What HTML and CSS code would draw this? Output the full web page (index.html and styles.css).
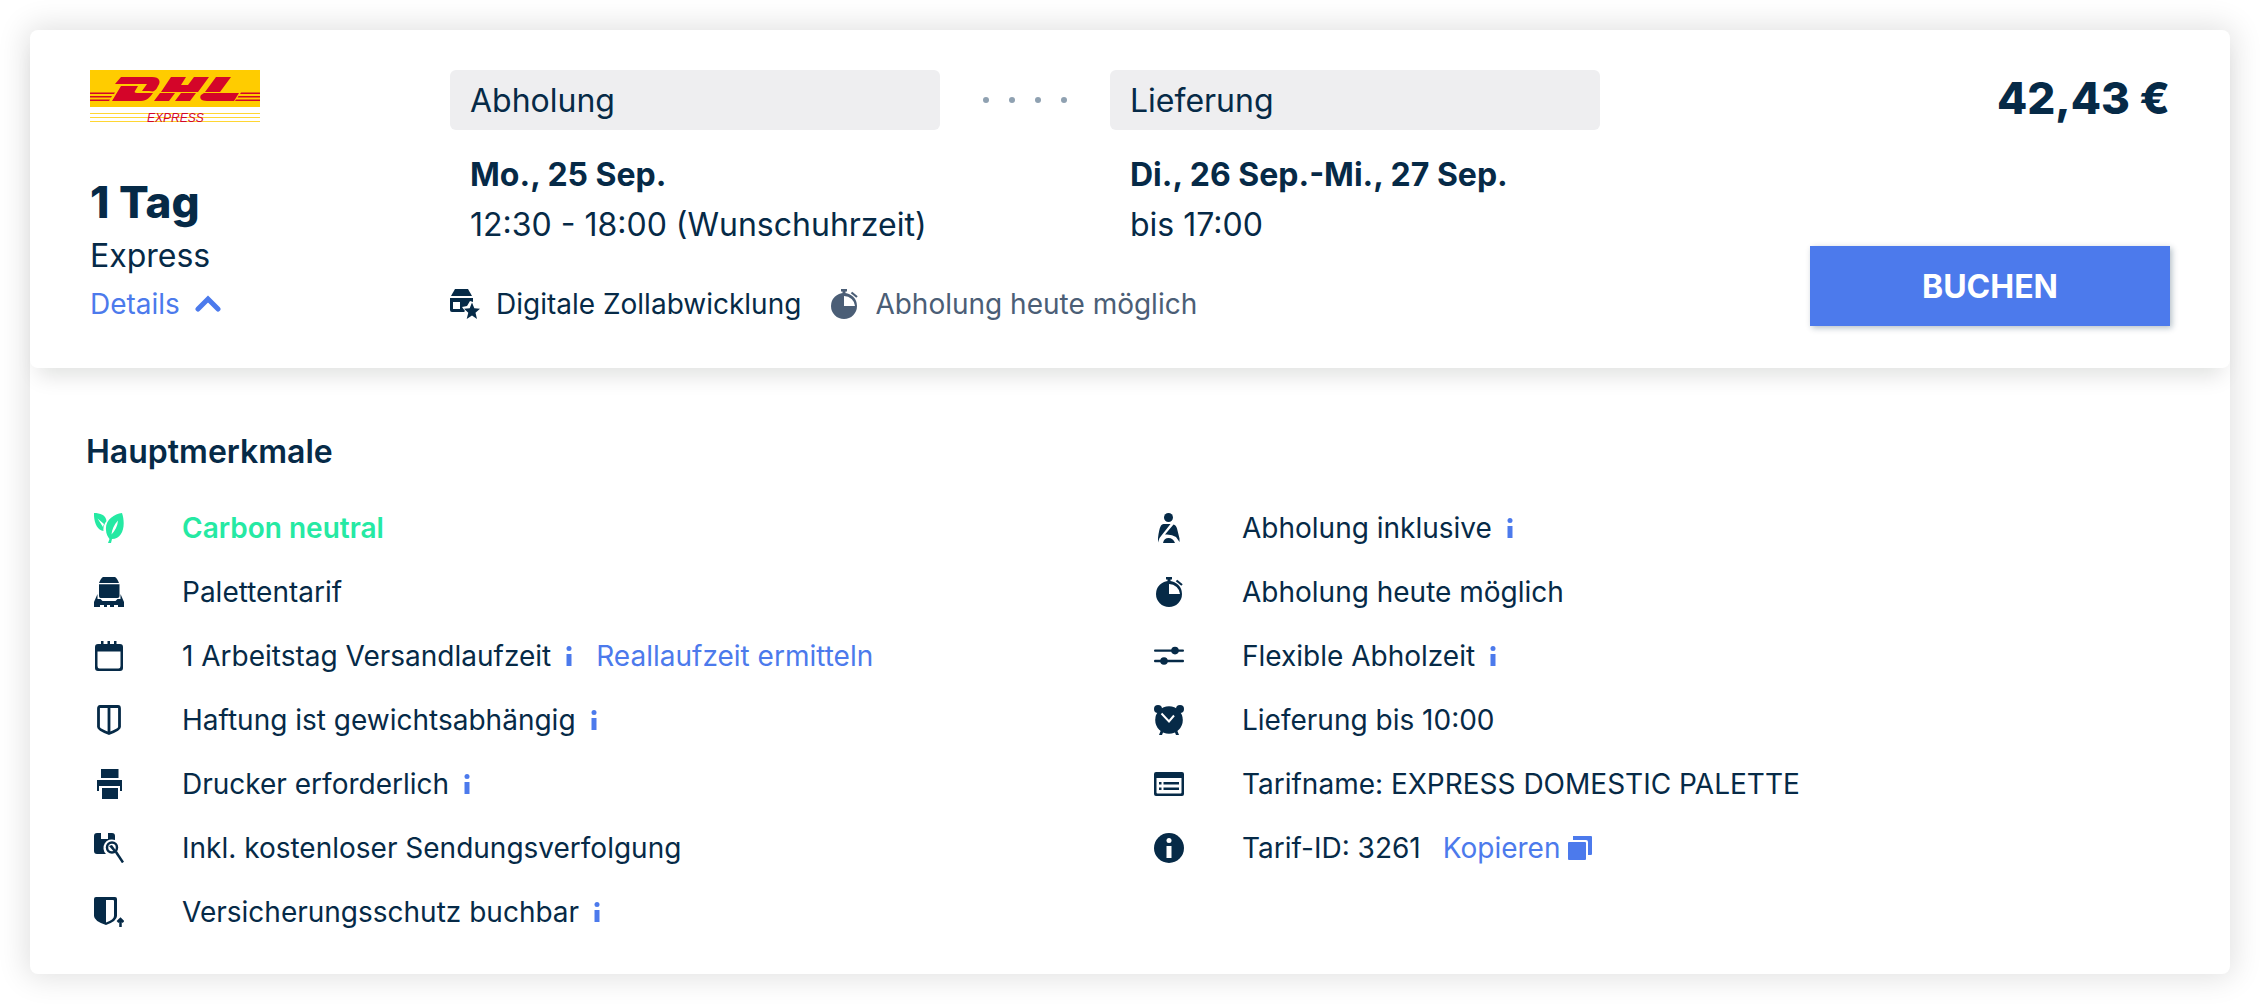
FILE: index.html
```html
<!DOCTYPE html>
<html lang="de">

<head>
    <meta charset="UTF-8">
    <meta name="viewport" content="width=device-width, initial-scale=1.0">
    <title>DHL Express</title>
    <link rel="stylesheet" href="styles.css">
</head>

<body>
    <!-- icons used more than once -->
    <svg class="sprite" aria-hidden="true">
        <symbol id="icon-stopwatch" viewBox="0 0 30 30">
            <path d="M12 0h6v2.500h-1.500V5h-3V2.500H12z" />
            <path fill-rule="evenodd" d="M15 4a13 13 0 1 0 0 26a13 13 0 1 0 0-26zM15 7v10h11A11 10.500 0 0 0 15 7z" />
            <path d="M22.500 3.500l5.500 4.500" stroke="currentColor" stroke-width="2.200" fill="none" />
        </symbol>
        <symbol id="icon-info" viewBox="0 0 6 20">
            <circle cx="3" cy="2.500" r="2.500" />
            <path d="M.5 8h5v12h-5z" />
        </symbol>
    </svg>

    <article class="rate">
        <header class="rate-header">
            <div class="carrier">
                <svg class="logo" viewBox="0 0 170 52" role="img" aria-label="DHL Express">
                    <path fill="#ffcc00" d="M0 0h170v37H0z" />
                    <path fill="#d40529" d="M31 7h31c8 0 9 5 6 9-1 2-2 4-4 5-1 1-3 0-5 0h-7l5-7H25z" />
                    <path fill="#d40529" d="M31 16h17l-3 5c-1 1 0 2 2 2h16c-3 4-6 8-12 8H22z" />
                    <path fill="#d40529" d="M81 7h15l-5 8h7l6-8h15l-11 15H71zM70 23h15l-6 8H64zM91 23h15l-6 8H85z" />
                    <path fill="#d40529" d="M126 7h15l-11 15h-15zM114 23h35l-5 8h-27c-6 0-8-3-6-6z" />
                    <path fill="#d40529" d="M0 22.500h25l-1 1.500H0zM0 26h22l-1 1.500H0zM0 29.500h20l-1 1.500H0zM151 22.500h19V24h-20zM148.500 26H170v1.500h-22.500zM146 29.500h24V31h-25z" />
                    <path fill="#ffd633" d="M0 43h170v1H0zM0 47h170v1H0zM0 51h170v1H0z" />
                    <text class="logo-text" x="57" y="52">EXPRESS</text>
                </svg>
                <h2 class="duration">1 Tag</h2>
                <p class="service">Express</p>
                <button type="button" class="details-toggle" aria-expanded="true">
                    Details
                    <svg class="chevron" viewBox="0 0 26 18"><path d="M3 14l10-10 10 10" /></svg>
                </button>
            </div>

            <div class="schedule">
                <div class="route">
                    <section>
                        <h3 class="stop-title">Abholung</h3>
                        <p class="stop-line"><strong>Mo., 25 Sep.</strong></p>
                        <p class="stop-line">12:30 - 18:00 (Wunschuhrzeit)</p>
                    </section>
                    <div class="dots"><i></i><i></i><i></i><i></i></div>
                    <section>
                        <h3 class="stop-title">Lieferung</h3>
                        <p class="stop-line"><strong>Di., 26 Sep.-Mi., 27 Sep.</strong></p>
                        <p class="stop-line">bis 17:00</p>
                    </section>
                </div>
                <ul class="badges">
                    <li>
                        <svg class="icon" viewBox="0 0 30 30">
                            <path d="M5 0h13l4 7H1z" />
                            <path fill-rule="evenodd" d="M0 9h23v4l-3-1-3 5-5 1 3 4-1 1H2q-2 0-2-2zM3 13v7h7v-7z" />
                            <path d="M22 13.500l2.300 5.800 5.700.5-4.500 4 1.500 6.200-5-3.400-5.300 3.400 1.600-6.200-4.300-4 5.700-.5z" />
                        </svg>
                        Digitale Zollabwicklung
                    </li>
                    <li class="muted">
                        <svg class="icon"><use href="#icon-stopwatch" /></svg>
                        Abholung heute möglich
                    </li>
                </ul>
            </div>

            <div class="booking">
                <p class="price">42,43 €</p>
                <button type="button" class="btn-book">BUCHEN</button>
            </div>
        </header>

        <section class="features">
            <h3 class="features-title">Hauptmerkmale</h3>
            <div class="features-columns">
                <ul class="feature-list">
                    <li class="green">
                        <svg class="icon" viewBox="0 0 30 30">
                            <path fill-rule="evenodd" d="M0 0C6 0 12 2 12.500 8C10 11 9 15 9.500 18C3 18-.5 8 0 0zM3.500 5.500L9 14l1-3z" />
                            <path fill-rule="evenodd" d="M28 0C20 1 11 7 12 17c0 4 2 7 3.500 9L14 30h3l1-4C29 26 32 12 28 0zM24 7.500c-4 4-6 9-6.500 14 3.500-4 6-8 6.500-14z" />
                        </svg>
                        Carbon neutral
                    </li>
                    <li>
                        <svg class="icon" viewBox="0 0 30 30">
                            <path d="M9 0h12q2 1 4 6H5q2-5 4-6zM5 7.200h20.500V19q0 2-2 2h-17q-1.500 0-1.500-2z" />
                            <path d="M3.500 17v5h3l2 2h13l2-2h3v-5l3.500 8v5h-6v-2h-4v2h-4v-2h-3v2h-3v-2H6v2H0v-5z" />
                        </svg>
                        Palettentarif
                    </li>
                    <li>
                        <svg class="icon" viewBox="0 0 30 30">
                            <path fill-rule="evenodd" d="M4 3h3V0h2.500v3h4V0H16v3h4V0h2.500v3H26q3 0 3 3v21q0 3-3 3H4q-3 0-3-3V6q0-3 3-3zM3.500 10.500V25q0 2.500 2 2.500h19q2 0 2-2.500V10.500z" />
                        </svg>
                        1 Arbeitstag Versandlaufzeit
                        <svg class="info"><use href="#icon-info" /></svg>
                        <a class="link" href="#">Reallaufzeit ermitteln</a>
                    </li>
                    <li>
                        <svg class="icon" viewBox="0 0 30 30">
                            <path fill="none" stroke="currentColor" stroke-width="2.800" d="M6 1.500h18q1.500 0 1.500 2V22q0 2.500-10.500 6.500Q4.500 24.500 4.500 22V3.500q0-2 1.500-2zM15 2v26" />
                        </svg>
                        Haftung ist gewichtsabhängig
                        <svg class="info"><use href="#icon-info" /></svg>
                    </li>
                    <li>
                        <svg class="icon" viewBox="0 0 30 30">
                            <path d="M7 0h17.500v9H7zM3 11h25v11h-2v-5H5v5H3zM8 19h16v11H8z" />
                        </svg>
                        Drucker erforderlich
                        <svg class="info"><use href="#icon-info" /></svg>
                    </li>
                    <li>
                        <svg class="icon" viewBox="0 0 30 30">
                            <path d="M3 0h4v6h7V0h4q3 0 3 3v4a8.500 8.500 0 0 0-9 14H3q-3 0-3-3V3q0-3 3-3z" />
                            <path fill="none" stroke="currentColor" stroke-width="2.500" d="M22 19l7 10.500" />
                            <circle fill="none" stroke="currentColor" stroke-width="2.500" cx="18" cy="14.500" r="5" />
                            <path d="M15 13l3-1 5 7-2 1z" />
                        </svg>
                        Inkl. kostenloser Sendungsverfolgung
                    </li>
                    <li>
                        <svg class="icon" viewBox="0 0 30 30">
                            <path fill-rule="evenodd" d="M2 0h19q2 0 2 2v17q0 5-11 9Q0 24 0 19V2q0-2 2-2zM12 3v22.500q8-3 8-6.500V4q0-1-1-1z" />
                            <path fill="none" stroke="currentColor" stroke-width="2.500" d="M26.500 30v-8M23.500 25l3-3 3 3" />
                        </svg>
                        Versicherungsschutz buchbar
                        <svg class="info"><use href="#icon-info" /></svg>
                    </li>
                </ul>
                <ul class="feature-list">
                    <li>
                        <svg class="icon" viewBox="0 0 30 30">
                            <circle cx="14.500" cy="4.500" r="4.500" />
                            <path d="M9.500 11h7L5.500 25 4 29.500V25q1-9 3-12.500 1-1.500 2.500-1.500z" />
                            <path d="M19.500 11.500q2.500.5 3.500 4l2.500 10V29l-3.500-5q-4-3-11-2.500zM9 30q1-5 5.500-5t6.500 5z" />
                        </svg>
                        Abholung inklusive
                        <svg class="info"><use href="#icon-info" /></svg>
                    </li>
                    <li>
                        <svg class="icon"><use href="#icon-stopwatch" /></svg>
                        Abholung heute möglich
                    </li>
                    <li>
                        <svg class="icon" viewBox="0 0 30 30">
                            <path d="M1 8.400h28q1 0 1 1.200t-1 1.200H1q-1 0-1-1.200t1-1.200zM1 18.800h28q1 0 1 1.200t-1 1.200H1q-1 0-1-1.200t1-1.200z" />
                            <circle cx="21" cy="9.600" r="3.800" />
                            <circle cx="10" cy="20" r="3.800" />
                        </svg>
                        Flexible Abholzeit
                        <svg class="info"><use href="#icon-info" /></svg>
                    </li>
                    <li>
                        <svg class="icon" viewBox="0 0 30 30">
                            <circle cx="4" cy="4" r="4" />
                            <circle cx="26" cy="4" r="4" />
                            <circle cx="15" cy="15" r="13.800" />
                            <path d="M5 30l2-5h3l-2 5zM25 30l-2-5h-3l2 5z" />
                            <path fill="none" stroke="#fff" stroke-width="2" d="M7.500 8.500l7.500 8 5-6" />
                        </svg>
                        Lieferung bis 10:00
                    </li>
                    <li>
                        <svg class="icon" viewBox="0 0 30 30">
                            <path fill-rule="evenodd" d="M2 3h26q2 0 2 2v20q0 2-2 2H2q-2 0-2-2V5q0-2 2-2zM2.500 9v14.500q0 1 1 1h23q1 0 1-1V9z" />
                            <path d="M5 13h2.500v2.500H5zM9.500 13H25v2.500H9.500zM5 18.500h2.500V21H5zM9.500 18.500H25V21H9.500z" />
                        </svg>
                        Tarifname: EXPRESS DOMESTIC PALETTE
                    </li>
                    <li>
                        <svg class="icon" viewBox="0 0 30 30">
                            <circle cx="15" cy="15" r="15" />
                            <circle fill="#fff" cx="15" cy="7.500" r="2.500" />
                            <path fill="#fff" d="M12.500 13h5v12h-5z" />
                        </svg>
                        Tarif-ID: 3261
                        <button type="button" class="copy">
                            Kopieren
                            <svg class="copy-icon" viewBox="0 0 24 24">
                                <path d="M1 6h16q1 0 1 1v16q0 1-1 1H1q-1 0-1-1V7q0-1 1-1zM5 0h18q1 0 1 1v17q0 1-1 1h-3V6q0-2-2-2H5z" />
                            </svg>
                        </button>
                    </li>
                </ul>
            </div>
        </section>
    </article>
</body>

</html>
```
FILE: styles.css
```css
* {
    box-sizing: border-box;
}

body {
    margin: 0;
    padding: 30px;
    background: #fff;
    color: #062a47;
    font-family: Inter, "Liberation Sans", sans-serif;
    font-size: 28px;
}

h2,
h3,
p,
ul {
    margin: 0;
    padding: 0;
    list-style: none;
}

button {
    padding: 0;
    border: 0;
    background: none;
    font-family: inherit;
    cursor: pointer;
}

svg {
    display: block;
    flex: none;
    fill: currentColor;
}

.sprite {
    position: absolute;
    width: 0;
    height: 0;
}

.icon {
    width: 30px;
    height: 30px;
}

.rate {
    border-radius: 8px;
    background: #fff;
    box-shadow: 0 0 30px 4px rgba(0, 0, 0, .12);
}

.rate-header {
    display: grid;
    grid-template-columns: 360px 1fr 360px;
    padding: 40px 60px;
    border-radius: 8px;
    box-shadow: 0 16px 20px -8px rgba(0, 20, 10, .12);
}

/* carrier */
.logo {
    width: 170px;
    height: 52px;
    margin-bottom: 50px;
    overflow: visible;
}

.logo-text {
    fill: #d40529;
    font-size: 12px;
    font-style: italic;
    font-family: "Liberation Sans", sans-serif;
}

.duration {
    font-size: 44px;
    font-weight: 800;
    line-height: 60px;
}

.service {
    font-size: 32px;
    line-height: 48px;
}

.details-toggle {
    display: flex;
    align-items: center;
    gap: 15px;
    color: #4c7aec;
    font-size: 28px;
    line-height: 48px;
}

.chevron {
    width: 26px;
    height: 18px;
    fill: none;
    stroke: currentColor;
    stroke-width: 5;
    stroke-linecap: round;
}

/* pickup and delivery */
.schedule {
    padding-right: 210px;
}

.route {
    display: grid;
    grid-template-columns: 1fr 170px 1fr;
}

.stop-title {
    margin-bottom: 20px;
    padding: 2px 20px 0;
    border-radius: 6px;
    background: #eeeef0;
    font-size: 32px;
    font-weight: 400;
    line-height: 58px;
}

.stop-line {
    padding-left: 20px;
    font-size: 32px;
    line-height: 50px;
    white-space: nowrap;
}

.dots {
    display: flex;
    align-items: center;
    justify-content: center;
    gap: 20px;
    height: 60px;
}

.dots i {
    width: 6px;
    height: 6px;
    border-radius: 50%;
    background: #8fa1b1;
}

.badges {
    display: flex;
    gap: 28px;
    margin-top: 34px;
    line-height: 40px;
    white-space: nowrap;
}

.badges li {
    display: flex;
    align-items: center;
    gap: 16px;
}

.muted {
    color: #4b5e76;
}

/* price */
.booking {
    display: flex;
    flex-direction: column;
    justify-content: space-between;
    padding-bottom: 2px;
    text-align: right;
}

.price {
    font-size: 44px;
    font-weight: 800;
    line-height: 56px;
}

.btn-book {
    height: 80px;
    background: #4c7aec;
    color: #fff;
    font-size: 32px;
    font-weight: 700;
    box-shadow: 2px 2px 6px rgba(6, 42, 71, .3);
}

/* features */
.features {
    padding: 60px 24px 30px 56px;
}

.features-title {
    margin-bottom: 20px;
    font-size: 32px;
    font-weight: 600;
    line-height: 48px;
}

.features-columns {
    display: grid;
    grid-template-columns: 1fr 1fr;
}

.feature-list li {
    display: flex;
    align-items: center;
    height: 64px;
    white-space: nowrap;
}

.feature-list .icon {
    margin: 0 58px 0 8px;
}

.green {
    color: #25e9a3;
    font-weight: 600;
}

.info {
    width: 6px;
    height: 20px;
    margin-left: 15px;
    color: #4c7aec;
}

.link {
    margin-left: 24px;
    color: #4c7aec;
    text-decoration: none;
}

.copy {
    display: flex;
    align-items: center;
    gap: 8px;
    margin-left: 22px;
    color: #4c7aec;
    font-size: 28px;
}

.copy-icon {
    width: 24px;
    height: 24px;
}
```
